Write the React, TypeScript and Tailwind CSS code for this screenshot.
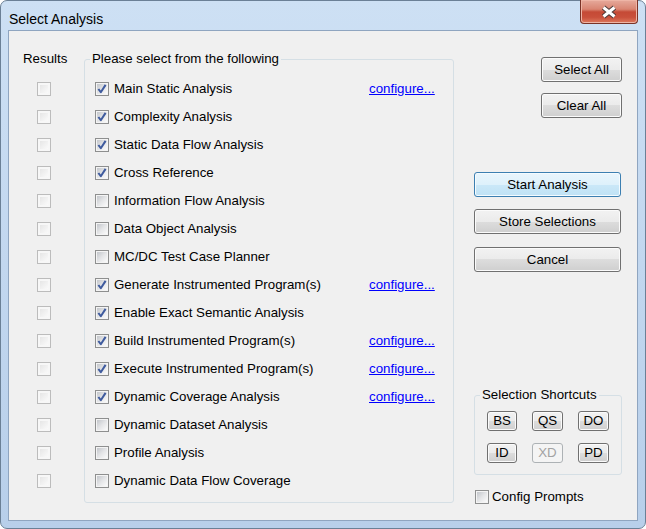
import React from "react";

type Row = { label: string; checked: boolean; configure?: boolean };

const rows: Row[] = [
  { label: "Main Static Analysis", checked: true, configure: true },
  { label: "Complexity Analysis", checked: true },
  { label: "Static Data Flow Analysis", checked: true },
  { label: "Cross Reference", checked: true },
  { label: "Information Flow Analysis", checked: false },
  { label: "Data Object Analysis", checked: false },
  { label: "MC/DC Test Case Planner", checked: false },
  { label: "Generate Instrumented Program(s)", checked: true, configure: true },
  { label: "Enable Exact Semantic Analysis", checked: true },
  { label: "Build Instrumented Program(s)", checked: true, configure: true },
  { label: "Execute Instrumented Program(s)", checked: true, configure: true },
  { label: "Dynamic Coverage Analysis", checked: true, configure: true },
  { label: "Dynamic Dataset Analysis", checked: false },
  { label: "Profile Analysis", checked: false },
  { label: "Dynamic Data Flow Coverage", checked: false },
];

function Box({ checked = false, disabled = false }: { checked?: boolean; disabled?: boolean }) {
  return (
    <span
      className={
        disabled
          ? "relative flex h-[14px] w-[14px] shrink-0 border border-[#bcbcbc] bg-[#f7f7f7] p-[2px]"
          : "relative flex h-[14px] w-[14px] shrink-0 border border-[#8e8f8f] bg-[#f4f4f4] p-[1px]"
      }
    >
      <span
        className={
          disabled
            ? "block h-full w-full bg-gradient-to-br from-[#e6e6e6] to-[#fafafa]"
            : "block h-full w-full bg-gradient-to-br from-[#c3c6cb] via-[#e4e5e7] to-[#fbfbfb]"
        }
      />
      {checked && (
        <svg className="absolute left-[-1px] top-[-1px]" width="14" height="14" viewBox="0 0 14 14">
          <path d="M3.4 7 L5.8 10.2 L10.6 2.9" fill="none" stroke="#3f5b9e" strokeWidth="2" strokeLinejoin="round" />
        </svg>
      )}
    </span>
  );
}

function Btn({
  children,
  className = "",
  primary = false,
  disabled = false,
}: {
  children: React.ReactNode;
  className?: string;
  primary?: boolean;
  disabled?: boolean;
}) {
  const base = "flex items-center justify-center rounded-[3px] border text-[13.3px] leading-[16px] ";
  const skin = disabled
    ? "border-[#adb2b5] bg-[#f4f4f4] text-[#a3a3a3]"
    : primary
    ? "border-[#3c7fb1] bg-[linear-gradient(#e9f5fc_0%,#def1fb_50%,#cbe8f8_50%,#bfe2f5_100%)] shadow-[inset_0_0_0_1px_#f4fbff] text-black"
    : "border-[#707070] bg-[linear-gradient(#f2f2f2_0%,#ebebeb_50%,#dddddd_50%,#cfcfcf_100%)] shadow-[inset_0_0_0_1px_#fbfbfb] text-black";
  return <div className={base + skin + " " + className}>{children}</div>;
}

function CloseBtn() {
  return (
    <div className="-mt-[1px] flex h-[24px] w-[58px] items-center justify-center rounded-b-[4px] border border-t-0 border-[#7a3327] bg-[linear-gradient(#e6aa9c_0%,#d98572_40%,#c54a36_52%,#c9503b_75%,#dd7a5f_100%)] shadow-[inset_0_0_0_1px_#eeb5a6]">
      <svg width="20" height="14" viewBox="0 0 20 14">
        <path d="M4.5 2.5 L15.5 11.5 M15.5 2.5 L4.5 11.5" stroke="#4b3a38" strokeWidth="5" />
        <path d="M4.5 2.5 L15.5 11.5 M15.5 2.5 L4.5 11.5" stroke="#ffffff" strokeWidth="3" />
      </svg>
    </div>
  );
}

export default function App() {
  return (
    <div className="h-[529px] w-[646px] overflow-hidden bg-white font-['Liberation_Sans',Arial,sans-serif]">
      <div className="flex h-full w-full flex-col rounded-[7px] border border-[#6b8096] bg-gradient-to-b from-[#cde0f4] via-[#c2d7ef] to-[#b8cfea] px-[7px] pb-[7px]">
        <div className="flex h-[29px] shrink-0 items-start justify-between">
          <div className="pl-[1px] pt-[9px] text-[14px] leading-[18px] text-black">Select Analysis</div>
          <CloseBtn />
        </div>
        <div className="flex flex-1 border border-[#8fa5c0] bg-[#f0f0f0] text-[13.3px] leading-[16px] text-black">
          {/* Results column */}
          <div className="flex w-[75px] shrink-0 flex-col">
            <div className="mt-[20px] h-[16px] pl-[14px]">Results</div>
            <div className="mt-[8px] flex flex-col">
              {rows.map((r) => (
                <div key={r.label} className="flex h-[28px] items-center pl-[28px]">
                  <Box disabled />
                </div>
              ))}
            </div>
          </div>

          {/* Main group */}
          <fieldset className="mt-[20px] w-[370px] shrink-0 self-start rounded-[3px] border border-[#d5dfe5] px-[5px] pb-[7px] pt-[8px]">
            <legend className="px-[2px] leading-[16px]">Please select from the following</legend>
            <div className="flex flex-col">
              {rows.map((r) => (
                <div key={r.label} className="flex h-[28px] items-center pl-[5px]">
                  <Box checked={r.checked} />
                  <span className="ml-[5px] w-[255px] whitespace-nowrap">{r.label}</span>
                  {r.configure && <span className="whitespace-nowrap text-[#0000ff] underline">configure...</span>}
                </div>
              ))}
            </div>
          </fieldset>

          {/* Right column */}
          <div className="ml-[20px] flex w-[148px] shrink-0 flex-col">
            <Btn className="ml-[67px] mt-[26px] h-[25px] w-[81px]">Select All</Btn>
            <Btn className="ml-[67px] mt-[11px] h-[25px] w-[81px]">Clear All</Btn>
            <Btn primary className="mt-[54px] h-[25px] w-[147px]">Start Analysis</Btn>
            <Btn className="mt-[12px] h-[25px] w-[147px]">Store Selections</Btn>
            <Btn className="mt-[13px] h-[25px] w-[147px]">Cancel</Btn>

            <fieldset className="mt-[115px] w-[148px] rounded-[3px] border border-[#d5dfe5] px-[5px] pb-[11px] pt-[8px]">
              <legend className="px-[2px] leading-[16px]">Selection Shortcuts</legend>
              <div className="flex flex-col gap-[12px] px-[7px]">
                <div className="flex justify-between">
                  <Btn className="h-[20px] w-[30px]">BS</Btn>
                  <Btn className="h-[20px] w-[31px]">QS</Btn>
                  <Btn className="h-[20px] w-[31px]">DO</Btn>
                </div>
                <div className="flex justify-between">
                  <Btn className="h-[20px] w-[30px]">ID</Btn>
                  <Btn disabled className="h-[20px] w-[31px]">XD</Btn>
                  <Btn className="h-[20px] w-[31px]">PD</Btn>
                </div>
              </div>
            </fieldset>

            <div className="ml-[1px] mt-[15px] flex h-[14px] items-center">
              <Box />
              <span className="ml-[3px] whitespace-nowrap">Config Prompts</span>
            </div>
          </div>
        </div>
      </div>
    </div>
  );
}
